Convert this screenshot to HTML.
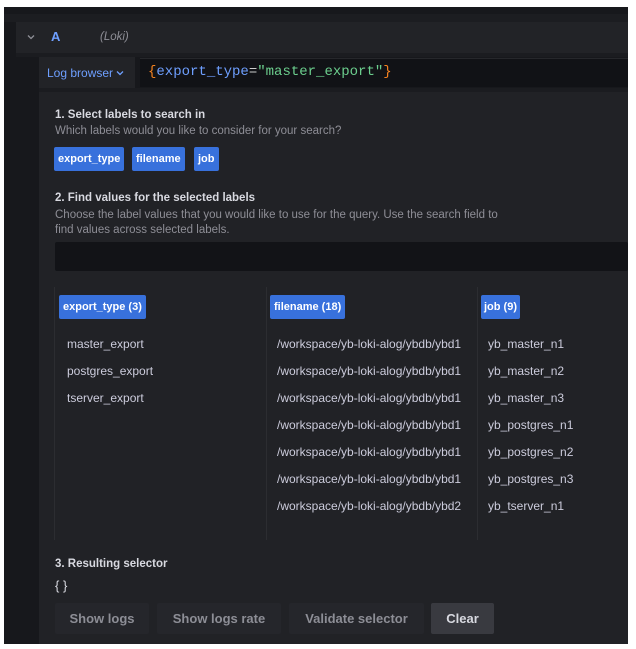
<!DOCTYPE html>
<html><head><style>
*{margin:0;padding:0;box-sizing:border-box}
body{width:636px;height:649px;background:#fff;position:relative;overflow:hidden;font-family:"Liberation Sans",sans-serif;}
.a{position:absolute}
.t{position:absolute;white-space:nowrap}
.chip{position:absolute;background:#3871dc;color:#fff;font-weight:bold;font-size:11px;border-radius:2px;padding:0 4px;line-height:24px;height:24px}
.item{position:absolute;color:#ccccdc;font-size:12px;white-space:nowrap}
.btn{position:absolute;top:603px;height:31px;background:#25262b;color:#8d8e96;font-weight:bold;font-size:13px;line-height:31px;text-align:center;border-radius:2px}
.h{position:absolute;white-space:nowrap;color:#d8d9e0;font-weight:bold;font-size:11.5px}
</style></head><body>
<div class="a" style="left:4px;top:7px;width:624px;height:637px;background:#17181c"></div>
<div class="a" style="left:4px;top:14px;width:624px;height:8px;background:#1c1d21"></div>
<div class="a" style="left:16px;top:22px;width:612px;height:31px;background:#222327"></div>
<svg class="a" style="left:27px;top:34px" width="8" height="6" viewBox="0 0 8 6"><path d="M1 1.5 L4 4.5 L7 1.5" stroke="#8e8e96" stroke-width="1.3" fill="none"/></svg>
<div class="t" style="left:51px;top:29px;color:#6e9fff;font-weight:bold;font-size:13px">A</div>
<div class="t" style="left:100px;top:31px;color:#8e8e96;font-style:italic;font-size:11.5px">(Loki)</div>
<div class="a" style="left:16px;top:53px;width:612px;height:4px;background:#1b1c20"></div>
<div class="a" style="left:39px;top:57px;width:96px;height:31px;background:#222327"></div>
<div class="t" style="left:47px;top:66px;color:#6e9fff;font-size:12px">Log browser</div>
<svg class="a" style="left:116px;top:70px" width="8" height="6" viewBox="0 0 8 6"><path d="M1 1.5 L4 4.5 L7 1.5" stroke="#6e9fff" stroke-width="1.3" fill="none"/></svg>
<div class="a" style="left:140px;top:58px;width:488px;height:29px;background:#111216;border-top:1px solid #26272b"></div>
<div class="t" style="left:148px;top:64px;font-family:'Liberation Mono',monospace;font-size:14px;color:#6e9fff"><span style="color:#f5821f">{</span>export_type<span style="color:#ccc">=</span><span style="color:#6ccf8e">"master_export"</span><span style="color:#f5821f">}</span></div>
<div class="a" style="left:39px;top:88px;width:589px;height:4px;background:#1b1c20"></div>
<div class="a" style="left:39px;top:92px;width:589px;height:552px;background:#212226"></div>
<div class="h" style="left:55px;top:109px">1. Select labels to search in</div>
<div class="t" style="left:55px;top:125px;color:#8e8e96;font-size:11.5px">Which labels would you like to consider for your search?</div>
<div class="chip" style="left:54px;top:147px">export_type</div>
<div class="chip" style="left:132px;top:147px">filename</div>
<div class="chip" style="left:194px;top:147px">job</div>
<div class="h" style="left:55px;top:192px">2. Find values for the selected labels</div>
<div class="t" style="left:55px;top:208px;color:#8e8e96;font-size:11.5px;line-height:15px">Choose the label values that you would like to use for the query. Use the search field to<br>find values across selected labels.</div>
<div class="a" style="left:55px;top:242px;width:573px;height:29px;background:#121317;border-radius:2px"></div>
<div class="a" style="left:54px;top:287px;width:1px;height:253px;background:#2c2d31"></div>
<div class="a" style="left:266px;top:287px;width:1px;height:253px;background:#2c2d31"></div>
<div class="a" style="left:477px;top:287px;width:1px;height:253px;background:#2c2d31"></div>
<div class="chip" style="left:59px;top:295px">export_type (3)</div>
<div class="chip" style="left:270px;top:295px">filename (18)</div>
<div class="chip" style="left:481px;top:295px;padding:0 3px">job (9)</div>
<div class="item" style="left:67px;top:337px">master_export</div>
<div class="item" style="left:67px;top:364px">postgres_export</div>
<div class="item" style="left:67px;top:391px">tserver_export</div>
<div class="item" style="left:277px;top:337px">/workspace/yb-loki-alog/ybdb/ybd1</div>
<div class="item" style="left:277px;top:364px">/workspace/yb-loki-alog/ybdb/ybd1</div>
<div class="item" style="left:277px;top:391px">/workspace/yb-loki-alog/ybdb/ybd1</div>
<div class="item" style="left:277px;top:418px">/workspace/yb-loki-alog/ybdb/ybd1</div>
<div class="item" style="left:277px;top:445px">/workspace/yb-loki-alog/ybdb/ybd1</div>
<div class="item" style="left:277px;top:472px">/workspace/yb-loki-alog/ybdb/ybd1</div>
<div class="item" style="left:277px;top:499px">/workspace/yb-loki-alog/ybdb/ybd2</div>
<div class="item" style="left:488px;top:337px">yb_master_n1</div>
<div class="item" style="left:488px;top:364px">yb_master_n2</div>
<div class="item" style="left:488px;top:391px">yb_master_n3</div>
<div class="item" style="left:488px;top:418px">yb_postgres_n1</div>
<div class="item" style="left:488px;top:445px">yb_postgres_n2</div>
<div class="item" style="left:488px;top:472px">yb_postgres_n3</div>
<div class="item" style="left:488px;top:499px">yb_tserver_n1</div>
<div class="h" style="left:55px;top:558px">3. Resulting selector</div>
<div class="t" style="left:55px;top:578px;color:#d8d9e0;font-size:13px">{ }</div>
<div class="btn" style="left:55px;width:94px">Show logs</div>
<div class="btn" style="left:157px;width:124px">Show logs rate</div>
<div class="btn" style="left:289px;width:135px">Validate selector</div>
<div class="btn" style="left:431px;width:63px;background:#393a40;color:#d8d9e0">Clear</div>
</body></html>
